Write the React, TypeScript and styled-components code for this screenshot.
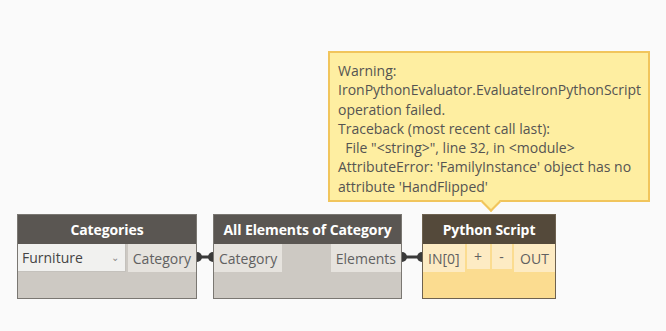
import React from "react";
import styled, { createGlobalStyle } from "styled-components";

const GlobalStyle = createGlobalStyle`
  html, body {
    margin: 0;
    padding: 0;
    background: #fafafa;
    font-family: "Open Sans", "Liberation Sans", sans-serif;
  }
`;

// palette for each node kind
const themes = {
  gray: {
    header: "#5a5652",
    body: "#cdc9c3",
    port: "#e6e3de",
    border: "#7a7772",
  },
  python: {
    header: "#54493a",
    body: "#fbdc90",
    port: "#fdebc3",
    border: "#6e6250",
  },
};

type Kind = keyof typeof themes;

const Canvas = styled.div`
  width: 666px;
  height: 331px;
  box-sizing: border-box;
  padding: 214px 0 0 17px;
  overflow: hidden;
`;

const Graph = styled.div`
  display: flex;
  align-items: flex-start;
`;

const Node = styled.div<{ $kind: Kind; $width: number }>`
  position: relative;
  width: ${(p) => p.$width}px;
  height: 85px;
  box-sizing: border-box;
  border: 1px solid ${(p) => themes[p.$kind].border};
  background: ${(p) => themes[p.$kind].body};
  display: flex;
  flex-direction: column;
`;

const Header = styled.div<{ $kind: Kind }>`
  height: 29px;
  background: ${(p) => themes[p.$kind].header};
  color: #ffffff;
  font-weight: 700;
  font-size: 14px;
  display: flex;
  align-items: center;
  justify-content: center;
  letter-spacing: -0.1px;
`;

const PortRow = styled.div`
  display: flex;
  align-items: flex-start;
  justify-content: space-between;
  height: 28px;
`;

const PortGroup = styled.div`
  display: flex;
  gap: 2px;
`;

const Port = styled.div<{ $kind: Kind; $short?: boolean; $width?: number }>`
  height: ${(p) => (p.$short ? 25 : 28)}px;
  ${(p) => (p.$width ? `width: ${p.$width}px; justify-content: center;` : "padding: 0 5px;")}
  background: ${(p) => themes[p.$kind].port};
  color: #616161;
  font-size: 14px;
  display: flex;
  align-items: center;
  box-sizing: border-box;
`;

const Dropdown = styled.div`
  width: 108px;
  height: 28px;
  box-sizing: border-box;
  background: #f1f1ef;
  border-right: 1px solid #c4c1bc;
  border-bottom: 1px solid #c4c1bc;
  display: flex;
  align-items: center;
  justify-content: space-between;
  padding: 0 6px 0 4px;
  color: #444;
  font-size: 14px;
`;

const Chevron = styled.span`
  color: #8a8a8a;
  font-size: 10px;
  margin-top: -2px;
`;

const Wire = styled.svg`
  display: block;
  margin-top: 38px;
  flex: none;
`;

const Tooltip = styled.div`
  position: absolute;
  left: -95px;
  bottom: 96px;
  width: 322px;
  box-sizing: border-box;
  padding: 8px 6px 4px 8px;
  background: #feeea1;
  border: 2px solid #f1c55c;
  color: #555452;
  font-size: 14px;
  line-height: 19.3px;
  white-space: pre;

  &::after {
    content: "";
    position: absolute;
    left: 154px;
    bottom: -9px;
    width: 12px;
    height: 12px;
    background: #feeea1;
    border-right: 2px solid #f1c55c;
    border-bottom: 2px solid #f1c55c;
    transform: rotate(45deg);
  }
`;

function Connector({ width }: { width: number }) {
  return (
    <Wire width={width} height={10} viewBox={`0 0 ${width} 10`}>
      <line x1={2} y1={5} x2={width - 2} y2={5} stroke="#3a3a3a" strokeWidth={3} />
      <path d="M0 0 A5 5 0 0 1 0 10 Z" fill="#3a3a3a" />
      <path d={`M${width} 0 A5 5 0 0 0 ${width} 10 Z`} fill="#3a3a3a" />
    </Wire>
  );
}

const warning = [
  "Warning:",
  "IronPythonEvaluator.EvaluateIronPythonScript",
  "operation failed.",
  "Traceback (most recent call last):",
  '  File "<string>", line 32, in <module>',
  "AttributeError: 'FamilyInstance' object has no",
  "attribute 'HandFlipped'",
].join("\n");

export default function App() {
  return (
    <Canvas>
      <GlobalStyle />
      <Graph>
        <Node $kind="gray" $width={180}>
          <Header $kind="gray">Categories</Header>
          <PortRow>
            <Dropdown>
              <span>Furniture</span>
              <Chevron>&#8964;</Chevron>
            </Dropdown>
            <Port $kind="gray">Category</Port>
          </PortRow>
        </Node>
        <Connector width={16} />
        <Node $kind="gray" $width={189}>
          <Header $kind="gray">All Elements of Category</Header>
          <PortRow>
            <Port $kind="gray">Category</Port>
            <Port $kind="gray">Elements</Port>
          </PortRow>
        </Node>
        <Connector width={20} />
        <Node $kind="python" $width={134}>
          <Tooltip>{warning}</Tooltip>
          <Header $kind="python">Python Script</Header>
          <PortRow>
            <PortGroup>
              <Port $kind="python">IN[0]</Port>
              <Port $kind="python" $short $width={23}>+</Port>
              <Port $kind="python" $short $width={20}>-</Port>
            </PortGroup>
            <Port $kind="python" $width={41}>OUT</Port>
          </PortRow>
        </Node>
      </Graph>
    </Canvas>
  );
}
